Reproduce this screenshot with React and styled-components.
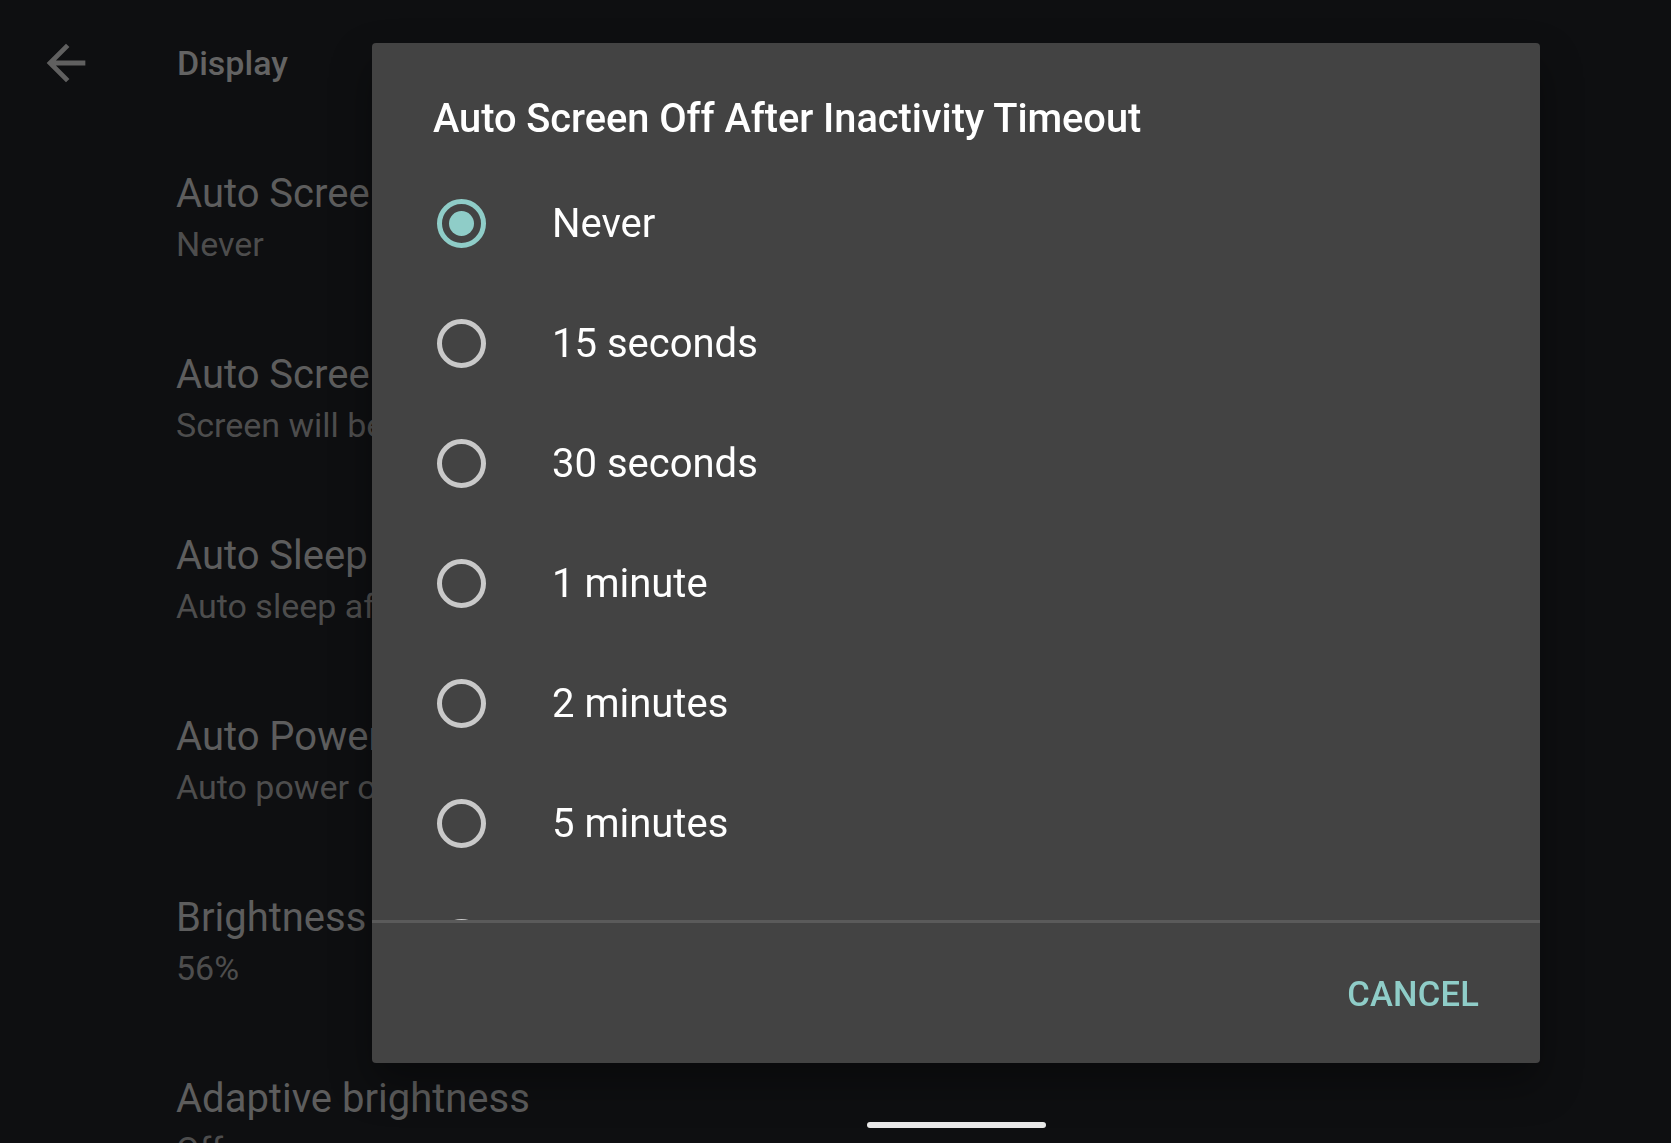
import React from 'react';
import styled, { createGlobalStyle } from 'styled-components';

const GlobalStyle = createGlobalStyle`
  html, body {
    margin: 0;
    padding: 0;
    background: #0e0f11;
    overflow: hidden;
  }
  body {
    font-family: Roboto, "Noto Sans", "Liberation Sans", sans-serif;
  }
`;

const settings = [
  { title: 'Auto Screen Off After Inactivity Timeout', summary: 'Never' },
  { title: 'Auto Screen Lock', summary: 'Screen will be locked after screen off' },
  { title: 'Auto Sleep', summary: 'Auto sleep after 10 minutes' },
  { title: 'Auto Power Off', summary: 'Auto power off after 1 hour' },
  { title: 'Brightness', summary: '56%' },
  { title: 'Adaptive brightness', summary: 'Off' }
];

const options = [
  'Never',
  '15 seconds',
  '30 seconds',
  '1 minute',
  '2 minutes',
  '5 minutes',
  '10 minutes',
  '30 minutes'
];

const Screen = styled.div`
  width: 1671px;
  height: 1143px;
  overflow: hidden;
  background: #0e0f11;
`;

const Toolbar = styled.header`
  display: flex;
  align-items: center;
  gap: 82px;
  height: 126px;
  padding-left: 37px;
`;

const BackButton = styled.button`
  display: flex;
  padding: 0;
  border: 0;
  background: none;
  color: #606060;
`;

const ToolbarTitle = styled.h1`
  margin: 0;
  font-size: 34px;
  font-weight: 500;
  color: #636363;
`;

const SettingsList = styled.div`
  display: flex;
  flex-direction: column;
`;

const SettingItem = styled.div`
  padding: 43px 0 38px 176px;
  white-space: nowrap;
`;

const SettingTitle = styled.div`
  font-size: 40px;
  line-height: 50px;
  color: #5d5d5d;
`;

const SettingSummary = styled.div`
  font-size: 34px;
  line-height: 50px;
  color: #4d4d4d;
`;

const Dialog = styled.div`
  position: fixed;
  left: 372px;
  top: 43px;
  width: 1168px;
  height: 1020px;
  display: flex;
  flex-direction: column;
  background: #434343;
  border-radius: 4px;
  box-shadow: 0 20px 40px rgba(0, 0, 0, 0.35);
  overflow: hidden;
`;

const DialogTitle = styled.h2`
  margin: 0;
  padding: 52px 61px 20px;
  font-size: 39.8px;
  line-height: 48px;
  font-weight: 500;
  letter-spacing: -0.05px;
  color: #ffffff;
`;

const OptionList = styled.div`
  height: 757px;
  overflow: hidden;
`;

const OptionRow = styled.label`
  display: flex;
  align-items: center;
  gap: 66px;
  height: 120px;
  padding-left: 65px;
  font-size: 40px;
  color: #ffffff;
`;

const Radio = styled.span`
  box-sizing: border-box;
  display: flex;
  align-items: center;
  justify-content: center;
  width: 49px;
  height: 49px;
  flex-shrink: 0;
  border-radius: 50%;
  border: 5px solid ${(p) => (p.checked ? '#8fcdc8' : '#c9c9c9')};

  &::after {
    content: '';
    display: ${(p) => (p.checked ? 'block' : 'none')};
    width: 25px;
    height: 25px;
    border-radius: 50%;
    background: #8fcdc8;
  }
`;

const Footer = styled.div`
  display: flex;
  align-items: center;
  justify-content: flex-end;
  flex: 1;
  padding: 2px 61px 0 0;
  border-top: 3px solid #5a5a5a;
`;

const TextButton = styled.button`
  padding: 0;
  border: 0;
  background: none;
  font-family: inherit;
  font-size: 34.5px;
  font-weight: 500;
  letter-spacing: 0.2px;
  color: #8fcdc8;
`;

const HomeIndicator = styled.div`
  position: fixed;
  left: 867px;
  top: 1122px;
  width: 179px;
  height: 6px;
  border-radius: 3px;
  background: #e8e8e8;
`;

const BackArrow = () => (
  <svg width="58" height="58" viewBox="0 0 24 24" fill="currentColor">
    <path d="M20 11H7.83l5.59-5.59L12 4l-8 8 8 8 1.41-1.41L7.83 13H20v-2z" />
  </svg>
);

const App = () => (
  <Screen>
    <GlobalStyle />
    <Toolbar>
      <BackButton aria-label="Back">
        <BackArrow />
      </BackButton>
      <ToolbarTitle>Display</ToolbarTitle>
    </Toolbar>
    <SettingsList>
      {settings.map((s) => (
        <SettingItem key={s.title}>
          <SettingTitle>{s.title}</SettingTitle>
          <SettingSummary>{s.summary}</SettingSummary>
        </SettingItem>
      ))}
    </SettingsList>

    <Dialog role="dialog">
      <DialogTitle>Auto Screen Off After Inactivity Timeout</DialogTitle>
      <OptionList>
        {options.map((o, i) => (
          <OptionRow key={o}>
            <Radio checked={i === 0} />
            {o}
          </OptionRow>
        ))}
      </OptionList>
      <Footer>
        <TextButton>CANCEL</TextButton>
      </Footer>
    </Dialog>
    <HomeIndicator />
  </Screen>
);

export default App;
